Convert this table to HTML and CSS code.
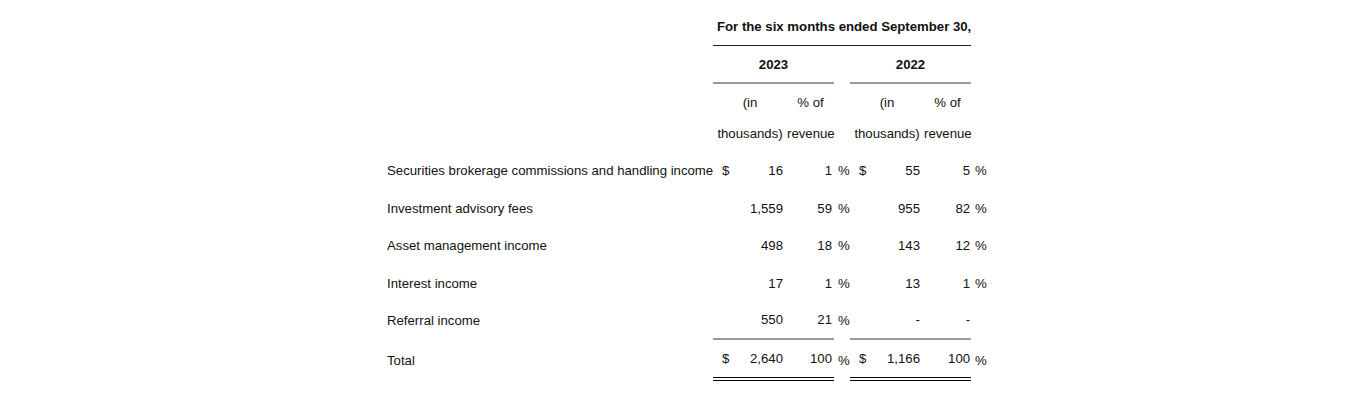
FILE: index.html
```html
<!DOCTYPE html>
<html lang="en">
<head>
<meta charset="utf-8">
<title>Revenue</title>
<link rel="stylesheet" href="styles.css">
</head>
<body>
<div class="page">
<table class="fin">
  <colgroup>
    <col class="c-label">
    <col class="c-dol"><col class="c-num"><col class="c-pct"><col class="c-sign">
    <col class="c-dol"><col class="c-num"><col class="c-pct"><col class="c-sign2">
  </colgroup>
  <tr class="r-title">
    <td></td>
    <td colspan="7" class="title">For the six months ended September 30,</td>
    <td></td>
  </tr>
  <tr class="r-year">
    <td></td>
    <td colspan="3" class="year">2023</td>
    <td></td>
    <td colspan="3" class="year">2022</td>
    <td></td>
  </tr>
  <tr class="r-sub">
    <td></td>
    <td colspan="2" class="sub">(in<br>thousands)</td>
    <td class="sub">% of<br>revenue</td>
    <td></td>
    <td colspan="2" class="sub">(in<br>thousands)</td>
    <td class="sub">% of<br>revenue</td>
    <td></td>
  </tr>
  <tr class="r-data">
    <td class="label">Securities brokerage commissions and handling income</td>
    <td class="dol">$</td><td class="num">16</td><td class="pct">1</td><td class="sign">%</td>
    <td class="dol">$</td><td class="num">55</td><td class="pct pct2">5</td><td class="sign">%</td>
  </tr>
  <tr class="r-data">
    <td class="label">Investment advisory fees</td>
    <td class="dol"></td><td class="num">1,559</td><td class="pct">59</td><td class="sign">%</td>
    <td class="dol"></td><td class="num">955</td><td class="pct pct2">82</td><td class="sign">%</td>
  </tr>
  <tr class="r-data">
    <td class="label">Asset management income</td>
    <td class="dol"></td><td class="num">498</td><td class="pct">18</td><td class="sign">%</td>
    <td class="dol"></td><td class="num">143</td><td class="pct pct2">12</td><td class="sign">%</td>
  </tr>
  <tr class="r-data">
    <td class="label">Interest income</td>
    <td class="dol"></td><td class="num">17</td><td class="pct">1</td><td class="sign">%</td>
    <td class="dol"></td><td class="num">13</td><td class="pct pct2">1</td><td class="sign">%</td>
  </tr>
  <tr class="r-data r-last">
    <td class="label">Referral income</td>
    <td class="dol rule"></td><td class="num rule">550</td><td class="pct rule">21</td><td class="sign">%</td>
    <td class="dol rule"></td><td class="num rule">-</td><td class="pct pct2 rule">-</td><td class="sign"></td>
  </tr>
  <tr class="r-total">
    <td class="label">Total</td>
    <td class="dol dbl">$</td><td class="num dbl">2,640</td><td class="pct dbl">100</td><td class="sign">%</td>
    <td class="dol dbl">$</td><td class="num dbl">1,166</td><td class="pct pct2 dbl">100</td><td class="sign">%</td>
  </tr>
</table>
</div>
</body>
</html>
```

FILE: styles.css
```css
html, body {
  margin: 0;
  padding: 0;
  background: #ffffff;
}

.page {
  padding: 7px 0 0 387px;
}

.fin {
  border-collapse: separate;
  border-spacing: 0;
  table-layout: fixed;
  width: 601px;
  font-family: "Liberation Sans", Arial, sans-serif;
  font-size: 13.2px;
  line-height: 15px;
  color: #111;
}

.c-label { width: 326px; }
.c-dol { width: 26px; }
.c-num { width: 48px; }
.c-pct { width: 47px; }
.c-sign { width: 16px; }
.c-sign2 { width: 17px; }

.fin td {
  padding: 0;
  vertical-align: middle;
  white-space: nowrap;
}

.r-title { height: 39px; }
.r-year { height: 38px; }
.r-sub { height: 68px; }
.r-data { height: 37.5px; }
.r-total { height: 41px; }

.title {
  font-weight: bold;
  text-align: center;
  border-bottom: 1px solid #222;
  padding-left: 4px !important;
}

.year {
  font-weight: bold;
  text-align: center;
  border-bottom: 2px solid #9a9a9a;
}

.sub {
  text-align: center;
  line-height: 31px;
}

.label {
  text-align: left;
}

.dol {
  text-align: left;
  padding-left: 9px !important;
}

.num {
  text-align: right;
  padding-right: 4px !important;
}

.pct {
  text-align: right;
  padding-right: 2px !important;
}

.pct2 {
  padding-right: 1px !important;
}

.sign {
  text-align: left;
  padding-left: 4px !important;
}

.rule {
  border-bottom: 2px solid #9a9a9a;
}

.dbl {
  border-bottom: 4px double #000;
}
```
